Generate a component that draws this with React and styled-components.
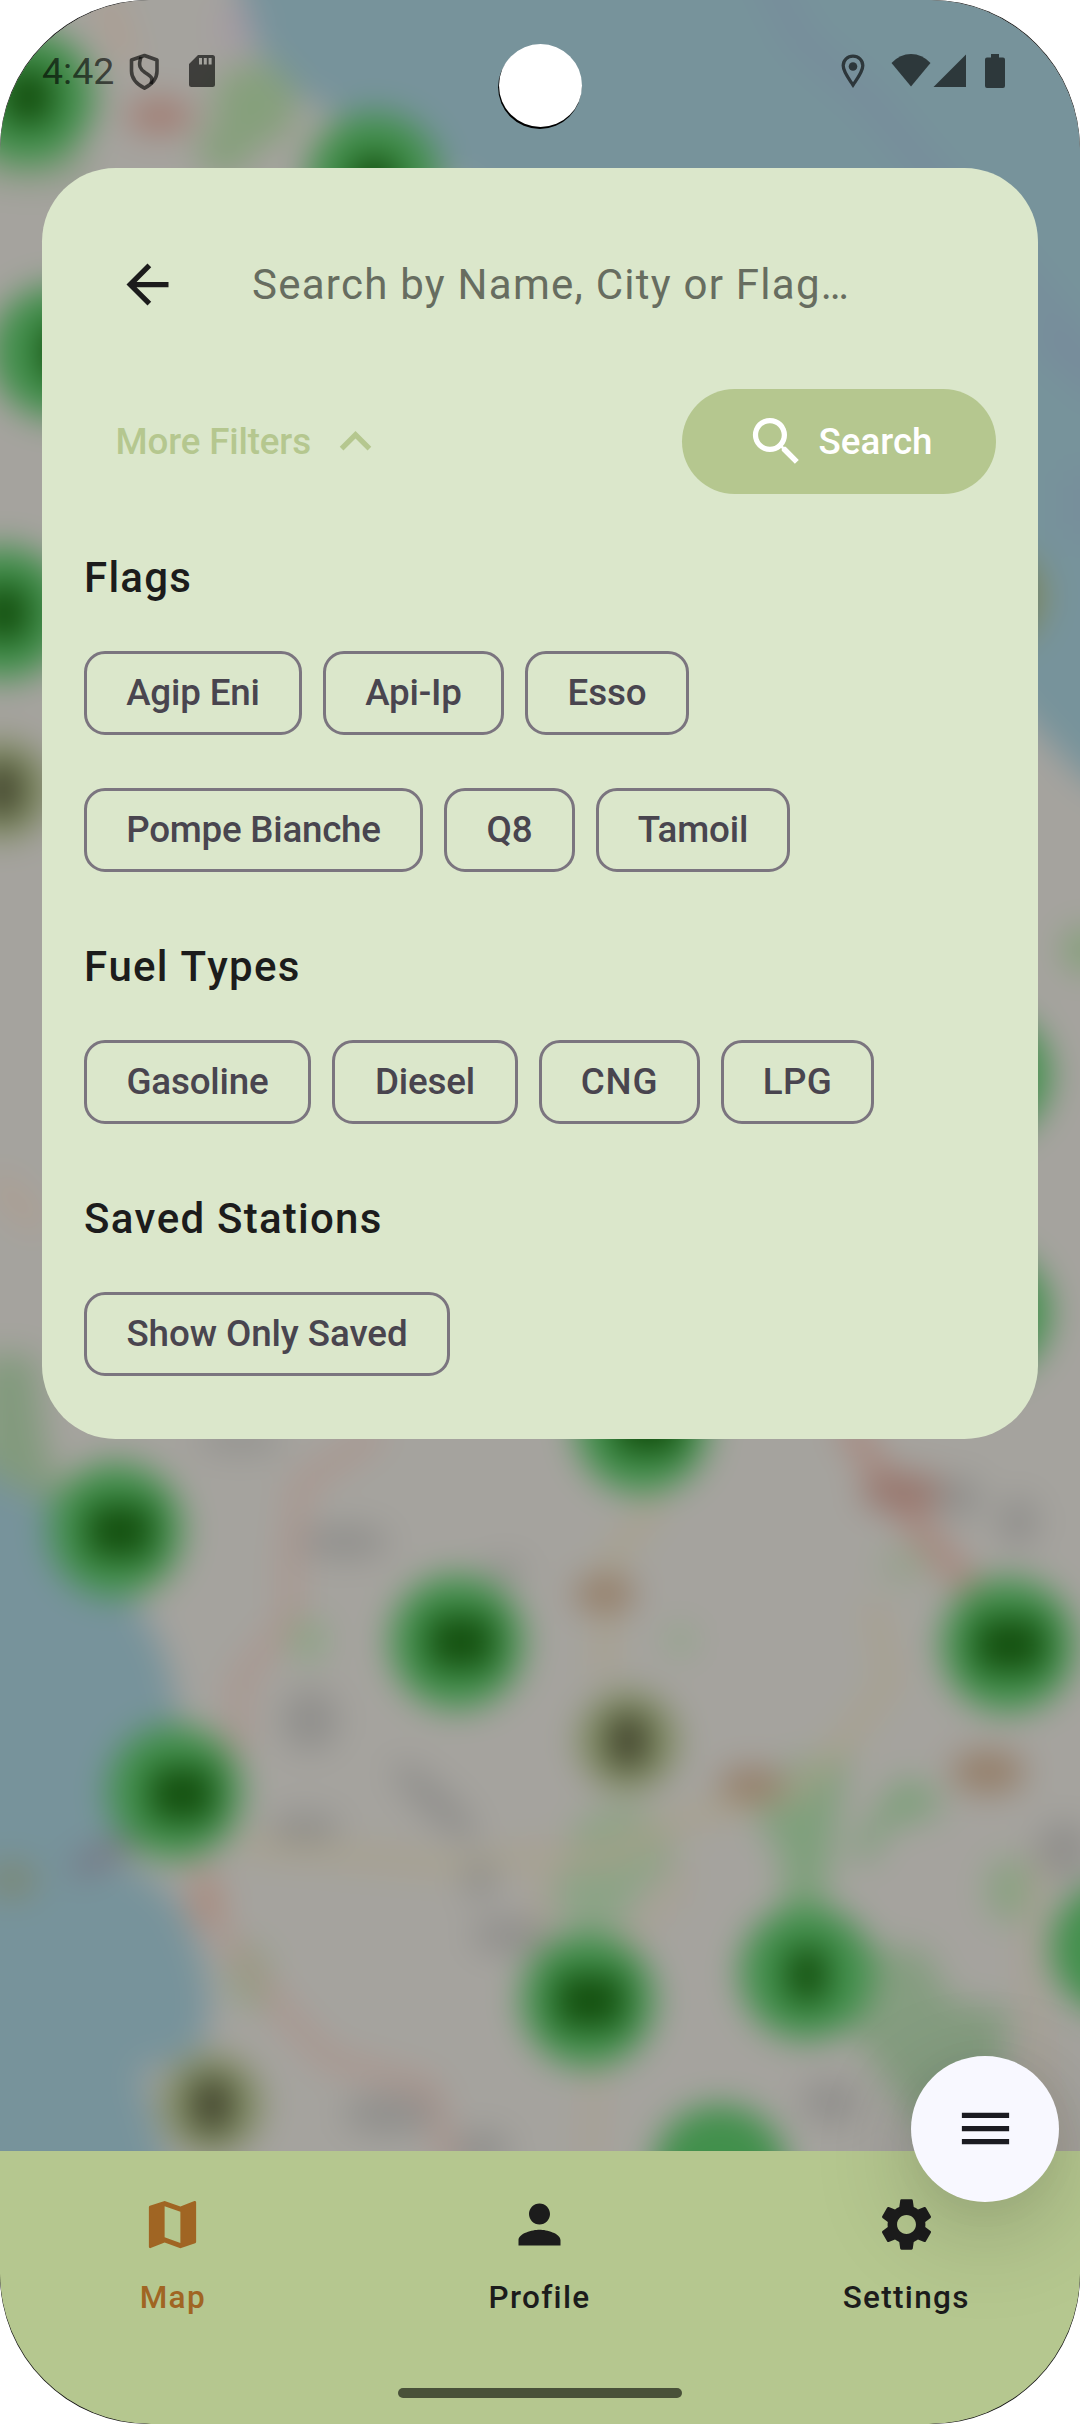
import React from "react";
import styled, { createGlobalStyle } from "styled-components";

const GlobalStyle = createGlobalStyle`
  *, *::before, *::after { box-sizing: border-box; }
  html, body { margin: 0; padding: 0; background: #fff; }
  body { font-family: Roboto, "Noto Sans", sans-serif; }
  button { font-family: inherit; }
`;

const Device = styled.div`
  width: 1080px;
  height: 2424px;
  border-radius: 149px;
  background: #111;
  overflow: hidden;
`;

const Screen = styled.div`
  position: relative;
  isolation: isolate;
  display: flex;
  flex-direction: column;
  width: 100%;
  height: 100%;
  border-radius: 151px;
  overflow: hidden;
`;

const MapCanvas = styled.svg`
  position: absolute;
  inset: 0;
  z-index: -1;
  width: 1080px;
  height: 2160px;
`;

const StatusBar = styled.header`
  display: flex;
  flex: none;
  justify-content: space-between;
  height: 168px;
  padding: 50px 74px 76px 42px;
  color: rgba(0, 0, 0, 0.62);
`;

const StatusGroup = styled.div`
  display: flex;
  align-items: center;
`;

const Clock = styled.span`
  width: 84px;
  font-size: 37.5px;
  line-height: 42px;
`;

const StatusIcon = styled.svg`
  display: block;
  flex: none;
  width: ${(p) => p.$w}px;
  height: 42px;
  margin-left: ${(p) => p.$gap || 0}px;
`;

const Camera = styled.div`
  position: absolute;
  top: 44px;
  left: 498.5px;
  width: 83px;
  height: 83px;
  border-radius: 50%;
  background: #fff;
  box-shadow: -0.7px 1.8px 0 0.2px #000;
`;

const Card = styled.main`
  display: flex;
  flex: none;
  flex-direction: column;
  height: 1271px;
  margin: 0 42px;
  padding: 42px;
  border-radius: 73.5px;
  background: #dbe7cb;
`;

const SearchRow = styled.div`
  display: flex;
  flex: none;
  align-items: center;
  height: 147px;
  padding: 2px 0 0 32px;
`;

const IconButton = styled.button`
  display: flex;
  padding: 0;
  border: 0;
  background: none;
  color: #1c1c1c;
`;

const Glyph = styled.svg`
  display: block;
  flex: none;
  width: 63px;
  height: 63px;
  fill: currentColor;
`;

const Placeholder = styled.span`
  margin-left: 73px;
  color: #676d60;
  font-size: 42px;
  line-height: 63px;
  letter-spacing: 1.25px;
  white-space: nowrap;
`;

const ActionRow = styled.div`
  display: flex;
  flex: none;
  align-items: center;
  justify-content: space-between;
  height: 105px;
  margin-top: 32px;
`;

const ButtonLabel = styled.span`
  padding-top: 1px;
`;

const FilterToggle = styled.button`
  display: flex;
  align-items: center;
  gap: 13px;
  padding: 0 0 0 31.5px;
  border: 0;
  background: none;
  color: #b5c78f;
  font-size: 36.75px;
  font-weight: 500;
  line-height: 52.5px;
  letter-spacing: -0.15px;
`;

const SearchButton = styled.button`
  display: flex;
  align-items: center;
  gap: 10.5px;
  width: 314px;
  height: 105px;
  padding: 0 0 0 63px;
  border: 0;
  border-radius: 52.5px;
  background: #b5c78f;
  color: #fff;
  font-size: 36.75px;
  font-weight: 500;
  line-height: 52.5px;
  letter-spacing: 0;
`;

const Section = styled.section`
  display: flex;
  flex: none;
  flex-direction: column;
  margin-top: ${(p) => p.$top}px;
`;

const SectionTitle = styled.h2`
  margin: 0 0 42px;
  color: #1c1c1c;
  font-size: 42px;
  font-weight: 500;
  font-kerning: none;
  line-height: 63px;
  letter-spacing: 1.25px;
`;

const Chips = styled.div`
  display: flex;
  flex-wrap: wrap;
  gap: 53px 21px;
`;

const Chip = styled.button`
  width: ${(p) => p.$width}px;
  height: 84px;
  padding: 1px 0 0;
  border: 3px solid #7b757f;
  border-radius: 21px;
  background: none;
  color: #49454f;
  font-size: 36.75px;
  font-weight: 500;
  line-height: 52.5px;
  letter-spacing: ${(p) => p.$tracking ?? -0.16}px;
  white-space: nowrap;
`;

const NavBar = styled.nav`
  display: flex;
  flex: none;
  flex-direction: column;
  align-items: center;
  height: 273px;
  margin-top: auto;
  background: #b5c78f;
`;

const Tabs = styled.div`
  display: flex;
  gap: 21px;
  width: 100%;
  height: 237px;
  padding-right: 1px;
`;

const Tab = styled.button`
  display: flex;
  flex: 1;
  flex-direction: column;
  align-items: center;
  gap: 21px;
  padding: 42px 0 0;
  border: 0;
  background: none;
  color: ${(p) => (p.$active ? "#a06523" : "#1c1c1c")};
  font-size: 31.5px;
  font-weight: 500;
  line-height: 42px;
  letter-spacing: 1.31px;
`;

const HomeIndicator = styled.div`
  width: 284px;
  height: 10px;
  border-radius: 5px;
  background: #495139;
`;

const Fab = styled.button`
  position: absolute;
  top: 2055.5px;
  left: 911px;
  display: flex;
  align-items: center;
  justify-content: center;
  width: 148px;
  height: 146.5px;
  padding: 0;
  border: 0;
  border-radius: 50%;
  background: #f8f8ff;
  color: #1b1b21;
  box-shadow: 0 26px 100px rgba(0, 0, 0, 0.21), 0 4px 40px rgba(0, 0, 0, 0.03);
`;

const GREEN_CLUSTERS = [
  [28, 97], [374, 180], [58, 352], [4, 613], [983, 1075], [983, 1313],
  [642, 1426], [116, 1530], [457, 1642], [1008, 1645], [175, 1792],
  [588, 2000], [807, 1973], [720, 2172], [1118, 1948],
];

const GREEN_LABELS = [
  [28, 97, 52], [374, 184, 48], [66, 352, 52], [4, 613, 52], [648, 1426, 68],
  [120, 1531, 68], [461, 1642, 68], [1010, 1645, 72], [182, 1794, 66],
  [590, 2001, 70], [807, 1975, 42],
];

const OLIVE_CLUSTERS = [[2, 790], [994, 597], [628, 1741], [212, 2105]];

const TOWN_NAMES = [
  [345, 1542, 62, 24], [310, 1720, 40, 44], [305, 1828, 50, 22], [510, 1936, 54, 26],
  [390, 2114, 66, 30], [482, 2150, 40, 28], [960, 1498, 30, 30], [1018, 1522, 28, 36],
  [240, 1440, 60, 16], [830, 2102, 40, 32], [505, 1570, 30, 14], [1064, 1850, 40, 40],
  [480, 1880, 22, 30],
];

const ROAD_SHIELDS = [[605, 1594, 50, 30], [752, 1785, 54, 28], [988, 1772, 60, 34]];

function BlurredMap() {
  return (
    <MapCanvas viewBox="0 0 1080 2160" aria-hidden="true">
      <defs>
        <filter id="soft" filterUnits="userSpaceOnUse" x="-120" y="-120" width="1320" height="2440" colorInterpolationFilters="sRGB">
          <feGaussianBlur stdDeviation="16.5" />
        </filter>
      </defs>
      <rect width="1080" height="2160" fill="#a5a39e" />
      <g filter="url(#soft)">
        <rect x="-120" y="-120" width="1320" height="2440" fill="#a5a39e" />
        <g fill="#77939b">
          <path d="M238-120V0Q262 80 330 112Q400 140 470 190L1010 700L1080 775L1200 850V-120Z" />
          <path d="M-120 1455H0Q60 1490 85 1560Q135 1590 160 1645Q180 1690 180 1760L120 1860Q180 1890 190 1930Q220 1990 204 2040Q185 2068 140 2068Q148 2110 172 2180V2320H-120Z" />
        </g>
        <g fill="#86a07c">
          <ellipse cx="255" cy="105" rx="42" ry="42" />
          <ellipse cx="225" cy="150" rx="28" ry="24" />
          <path d="M790 1765L850 1745L835 1830L820 1930L785 1930L780 1850L755 1820Z" fill="#7fa07c" />
          <path d="M890 1790Q915 1760 945 1810L885 1830L868 1865L850 1850Z" fill="#7fa07c" />
          <ellipse cx="620" cy="1850" rx="52" ry="45" fill="#90a387" />
          <ellipse cx="595" cy="1895" rx="40" ry="36" fill="#8ca386" />
          <ellipse cx="1010" cy="1890" rx="24" ry="32" fill="#8aa282" />
          <path d="M860 1945L925 1950L950 2000L1010 2010L1000 2090L940 2150L900 2100L850 2030Z" fill="#859d80" />
          <ellipse cx="308" cy="1640" rx="18" ry="22" fill="#8ca585" />
          <ellipse cx="250" cy="1975" rx="20" ry="34" transform="rotate(-20 250 1975)" />
          <path d="M-20 1355H35L45 1440L65 1510L20 1490L-20 1470Z" fill="#829a7d" />
          <ellipse cx="1085" cy="950" rx="22" ry="22" fill="#82a077" />
          <ellipse cx="680" cy="1640" rx="14" ry="14" fill="#8fa688" />
          <ellipse cx="905" cy="1565" rx="26" ry="18" fill="#98a28e" />
          <ellipse cx="30" cy="165" rx="60" ry="20" fill="#8f9d88" />
        </g>
        <g fill="none" strokeWidth="17" strokeLinecap="round" strokeLinejoin="round">
          <path d="M375 1435L300 1485L291 1560L290 1620L240 1680L236 1750M200 1865L212 1920L245 1965L290 2020L330 2060L430 2088L450 2165" stroke="#ab938b" />
          <path d="M850 1430L885 1480L920 1530L990 1610" stroke="#a7847a" strokeWidth="22" />
          <path d="M655 1505L610 1560L604 1670M245 1845L350 1855L450 1865L545 1855L600 1860L680 1820L800 1790L850 1735L890 1680L875 1610" stroke="#a8a18b" />
          <path d="M545 1850L540 1960M600 2030L590 2160M1040 1860L1030 1960L1040 2090L1060 2160M670 1900L680 1870M630 1940L670 1890" stroke="#a8a092" />
          <path d="M0 1185L35 1220M105 0L125 55" stroke="#b09c8c" />
          <path d="M765-30L800 40L870 100L915 155L1000 250L1100 370M1040 340L1100 390M1080 480V530" stroke="#778c9b" strokeWidth="24" />
          <path d="M80 1868L130 1842" stroke="#78727f" />
        </g>
        <g fill="#a27b71">
          <ellipse cx="160" cy="116" rx="34" ry="17" />
          <ellipse cx="903" cy="1492" rx="42" ry="20" fill="#98776e" />
          <ellipse cx="206" cy="1902" rx="15" ry="24" fill="#ab887a" />
          <ellipse cx="236" cy="28" rx="16" ry="32" fill="#a49aa3" />
          <ellipse cx="12" cy="1880" rx="26" ry="18" fill="#7b8876" />
        </g>
        <g fill="#858583" opacity=".6">
          {TOWN_NAMES.map(([x, y, rx, ry]) => (
            <ellipse key={`${x}-${y}`} cx={x} cy={y} rx={rx * 0.72} ry={ry * 0.72} />
          ))}
          <ellipse cx="435" cy="1802" rx="56" ry="16" transform="rotate(43 435 1802)" />
        </g>
        <g fill="#957f6a">
          {ROAD_SHIELDS.map(([x, y, rx, ry]) => (
            <ellipse key={x} cx={x} cy={y} rx={rx * 0.62} ry={ry * 0.64} />
          ))}
        </g>
        <g fill="#42904c">
          {GREEN_CLUSTERS.map(([x, y]) => <circle key={`${x}-${y}`} cx={x} cy={y} r="67" />)}
        </g>
        <g fill="#14500f">
          {GREEN_LABELS.map(([x, y, w]) => (
            <rect key={`${x}-${y}`} x={x - w / 2} y={y - 28} width={w} height="56" rx="14" />
          ))}
        </g>
        {OLIVE_CLUSTERS.map(([x, y]) => (
          <g key={x}>
            <circle cx={x} cy={y} r="50" fill="#7d8960" />
            <rect x={x - 18} y={y - 25} width="36" height="50" rx="10" fill="#3f402b" />
          </g>
        ))}
      </g>
    </MapCanvas>
  );
}

const ICONS = {
  back: "M20 11H7.83l5.59-5.59L12 4l-8 8 8 8 1.41-1.41L7.83 13H20v-2z",
  expandLess: "M12 8l-6 6 1.41 1.41L12 10.83l4.59 4.58L18 14z",
  search: "M15.5 14h-.79l-.28-.27A6.47 6.47 0 0 0 16 9.5 6.5 6.5 0 1 0 9.5 16c1.61 0 3.09-.59 4.23-1.57l.27.28v.79l5 4.99L20.49 19l-4.99-5zm-6 0C7.01 14 5 11.99 5 9.5S7.01 5 9.5 5 14 7.01 14 9.5 11.99 14 9.5 14z",
  map: "M20.5 3l-.16.03L15 5.1 9 3 3.36 4.9c-.21.07-.36.25-.36.48V20.5c0 .28.22.5.5.5l.16-.03L9 18.9l6 2.1 5.64-1.9c.21-.07.36-.25.36-.48V3.5c0-.28-.22-.5-.5-.5zM15 19l-6-2.11V5l6 2.11V19z",
  person: "M12 12c2.21 0 4-1.79 4-4s-1.79-4-4-4-4 1.79-4 4 1.79 4 4 4zm0 2c-2.67 0-8 1.34-8 4v2h16v-2c0-2.66-5.33-4-8-4z",
  settings: "M19.14 12.94c.04-.3.06-.61.06-.94 0-.32-.02-.64-.07-.94l2.03-1.58c.18-.14.23-.41.12-.61l-1.92-3.32c-.12-.22-.37-.29-.59-.22l-2.39.96c-.5-.38-1.03-.7-1.62-.94l-.36-2.54c-.04-.24-.24-.41-.48-.41h-3.84c-.24 0-.43.17-.47.41l-.36 2.54c-.59.24-1.13.57-1.62.94l-2.39-.96c-.22-.08-.47 0-.59.22L2.74 8.87c-.12.21-.08.47.12.61l2.03 1.58c-.05.3-.09.63-.09.94s.02.64.07.94l-2.03 1.58c-.18.14-.23.41-.12.61l1.92 3.32c.12.22.37.29.59.22l2.39-.96c.5.38 1.03.7 1.62.94l.36 2.54c.05.24.24.41.48.41h3.84c.24 0 .44-.17.47-.41l.36-2.54c.59-.24 1.13-.56 1.62-.94l2.39.96c.22.08.47 0 .59-.22l1.92-3.32c.12-.22.07-.47-.12-.61l-2.01-1.58zM12 15.6c-1.98 0-3.6-1.62-3.6-3.6s1.62-3.6 3.6-3.6 3.6 1.62 3.6 3.6-1.62 3.6-3.6 3.6z",
  menu: "M3 18h18v-2H3v2zm0-5h18v-2H3v2zm0-7v2h18V6H3z",
};

function Icon({ name }) {
  return (
    <Glyph viewBox="0 0 24 24" aria-hidden="true">
      <path d={ICONS[name]} />
    </Glyph>
  );
}

function PhoneStatus() {
  return (
    <StatusBar>
      <StatusGroup>
        <Clock>4:42</Clock>
        <StatusIcon $w={36} viewBox="0 0 36 42" fill="none" stroke="currentColor" strokeWidth="3.6" strokeLinejoin="round">
          <path d="M18.5 5.5L31 10V21C31 28 26.500 34 18.500 38.200C10.500 34 5.500 28 5.500 21V10Z" />
          <path d="M15 7C12 16 14 19 19 22.500C26 27 27 28 25 34" />
        </StatusIcon>
        <StatusIcon $w={28} $gap={26} viewBox="0 0 28 42" fill="currentColor">
          <path fillRule="evenodd" d="M10 5H24.500Q27 5 27 7.500V34.500Q27 37 24.500 37H3.500Q1 37 1 34.500V14ZM11 8V14.500H14V8ZM15.800 8V14.500H18.800V8ZM20.600 8V14.500H23.600V8Z" />
        </StatusIcon>
      </StatusGroup>
      <StatusGroup>
        <StatusIcon $w={26} viewBox="0 0 26 42">
          <path d="M13 6.200C7.500 6.200 3.200 10.300 3.200 15.600C3.200 22 9 29 13 35C17 29 22.800 22 22.800 15.600C22.800 10.300 18.500 6.200 13 6.200Z" fill="none" stroke="currentColor" strokeWidth="3.300" />
          <circle cx="13" cy="16.500" r="4.300" fill="currentColor" />
        </StatusIcon>
        <StatusIcon $w={40} $gap={25} viewBox="0 0 40 42" fill="currentColor">
          <path d="M.5 13Q9 4 20 4T39.500 13L20 36.500Z" />
        </StatusIcon>
        <StatusIcon $w={34} $gap={2} viewBox="0 0 34 42" fill="currentColor">
          <path d="M33 4.500V37H.5Z" />
        </StatusIcon>
        <StatusIcon $w={22} $gap={17} viewBox="0 0 22 42" fill="currentColor">
          <path d="M7 4H15V7.500H19Q21 7.500 21 9.500V36Q21 38 19 38H3Q1 38 1 36V9.500Q1 7.500 3 7.500H7Z" />
        </StatusIcon>
      </StatusGroup>
    </StatusBar>
  );
}

const FLAGS = [
  { label: "Agip Eni", width: 218 },
  { label: "Api-Ip", width: 181 },
  { label: "Esso", width: 164 },
  { label: "Pompe Bianche", width: 339, tracking: -0.25 },
  { label: "Q8", width: 131 },
  { label: "Tamoil", width: 194 },
];

const FUELS = [
  { label: "Gasoline", width: 227 },
  { label: "Diesel", width: 186 },
  { label: "CNG", width: 161, tracking: 0.8 },
  { label: "LPG", width: 153, tracking: 0.4 },
];

const SAVED = [{ label: "Show Only Saved", width: 366, tracking: -0.08 }];

function FilterSection({ title, options, top }) {
  return (
    <Section $top={top}>
      <SectionTitle>{title}</SectionTitle>
      <Chips>
        {options.map(({ label, width, tracking }) => (
          <Chip key={label} $width={width} $tracking={tracking}>{label}</Chip>
        ))}
      </Chips>
    </Section>
  );
}

export default function App() {
  return (
    <>
      <GlobalStyle />
      <Device>
        <Screen>
          <BlurredMap />
          <PhoneStatus />
          <Card>
            <SearchRow>
              <IconButton aria-label="Back"><Icon name="back" /></IconButton>
              <Placeholder>Search by Name, City or Flag…</Placeholder>
            </SearchRow>
            <ActionRow>
              <FilterToggle>
                <ButtonLabel>More Filters</ButtonLabel>
                <Icon name="expandLess" />
              </FilterToggle>
              <SearchButton>
                <Icon name="search" />
                <ButtonLabel>Search</ButtonLabel>
              </SearchButton>
            </ActionRow>
            <FilterSection title="Flags" top={52} options={FLAGS} />
            <FilterSection title="Fuel Types" top={63} options={FUELS} />
            <FilterSection title="Saved Stations" top={63} options={SAVED} />
          </Card>
          <NavBar>
            <Tabs>
              <Tab $active><Icon name="map" />Map</Tab>
              <Tab><Icon name="person" />Profile</Tab>
              <Tab><Icon name="settings" />Settings</Tab>
            </Tabs>
            <HomeIndicator />
          </NavBar>
          <Fab aria-label="Menu"><Icon name="menu" /></Fab>
          <Camera />
        </Screen>
      </Device>
    </>
  );
}
